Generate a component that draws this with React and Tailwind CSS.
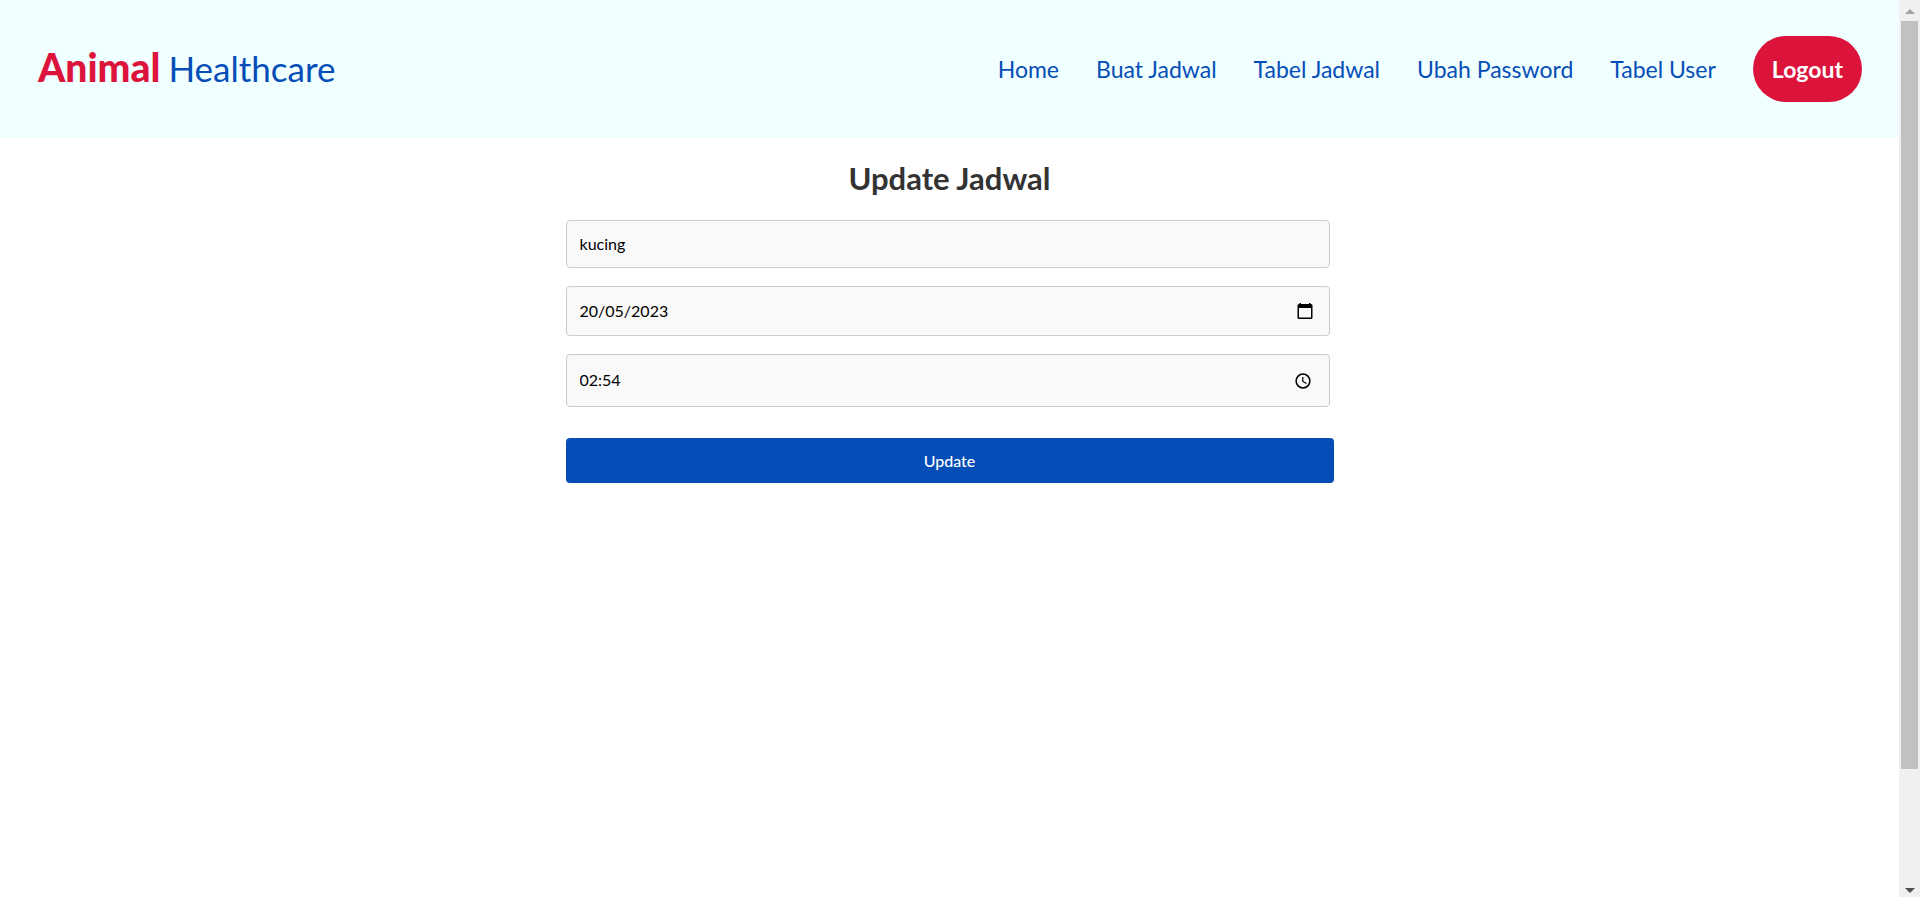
const links = ["Home", "Buat Jadwal", "Tabel Jadwal", "Ubah Password", "Tabel User"];

const fieldClass =
  "block w-full rounded border border-[#cccccc] bg-[#f9f9f9] px-[13px] pb-0.5 text-base text-black outline-none";

function CalendarIcon() {
  return (
    <svg viewBox="0 0 16 17" className="h-[17px] w-4" fill="currentColor" aria-hidden="true">
      <path
        fillRule="evenodd"
        d="M2.500 0h1.500v1h8V0h1.500v1h.500q1.500 0 1.500 1.500v12q0 1.500-1.500 1.500h-12Q.500 16 .500 14.500v-12Q.500 1 2 1h.500zM2 5v9.500h12V5z"
      />
    </svg>
  );
}

function ClockIcon() {
  return (
    <svg viewBox="0 0 16 16" className="size-4" fill="none" stroke="currentColor" aria-hidden="true">
      <circle cx="8" cy="8" r="6.900" strokeWidth="1.500" />
      <path d="M7.800 4v4.400l3.700 2.200" strokeWidth="1.200" />
    </svg>
  );
}

function Header() {
  return (
    <header className="flex items-center justify-between bg-[#f0ffff] pr-[37px] pl-[38px] py-9">
      <a href="#home" className="flex items-baseline gap-2 pb-[3px] leading-none text-[#054eb8]">
        <span className="text-[39px] leading-9 font-black text-[#dc143c]">Animal</span>
        <span className="text-[35px] leading-9">Healthcare</span>
      </a>
      <nav className="flex items-center gap-[37px] text-[23px] text-[#054eb8]">
        {links.map((label) => (
          <a key={label} href="#menu" className="whitespace-nowrap">
            {label}
          </a>
        ))}
        <button
          type="button"
          className="h-[66px] rounded-full bg-[#dc143c] px-[19px] font-bold text-white"
        >
          Logout
        </button>
      </nav>
    </header>
  );
}

function UpdateForm() {
  return (
    <main className="mx-auto w-full max-w-3xl pt-5">
      <h1 className="text-center text-[31px] leading-10 font-bold text-[#333333]">Update Jadwal</h1>
      <form className="mt-[22px]" onSubmit={(event) => event.preventDefault()}>
        <div className="flex flex-col gap-[18px] pr-1">
          <input
            type="text"
            aria-label="Hewan"
            defaultValue="kucing"
            className={`${fieldClass} h-12`}
          />
          <div className="relative">
            <input
              type="text"
              aria-label="Tanggal"
              defaultValue="20/05/2023"
              className={`${fieldClass} h-[50px]`}
            />
            <button
              type="button"
              aria-label="Pilih tanggal"
              className="absolute inset-y-0 right-[17px] flex items-center text-black"
            >
              <CalendarIcon />
            </button>
          </div>
          <div className="relative">
            <input
              type="text"
              aria-label="Waktu"
              defaultValue="02:54"
              className={`${fieldClass} h-[53px]`}
            />
            <button
              type="button"
              aria-label="Pilih waktu"
              className="absolute inset-y-0 right-[19px] flex items-center text-black"
            >
              <ClockIcon />
            </button>
          </div>
        </div>
        <button
          type="submit"
          className="mt-[31px] block h-[45px] w-full rounded bg-[#054eb8] text-base font-medium text-white"
        >
          Update
        </button>
      </form>
    </main>
  );
}

function ScrollRail() {
  return (
    <div aria-hidden="true" className="sticky top-0 flex h-screen w-[21px] shrink-0 flex-col bg-[#f0f0f0]">
      <div className="flex h-[21px] items-end justify-center pb-[7px]">
        <svg viewBox="0 0 10 5" className="h-[5px] w-2.5" fill="#a3a3a3">
          <path d="M5 0 10 5H0z" />
        </svg>
      </div>
      <div className="flex-1 px-0.5">
        <div className="h-7/8 bg-[#c1c1c1]" />
      </div>
      <div className="flex h-[21px] items-end justify-center pb-1">
        <svg viewBox="0 0 10 5" className="h-[5px] w-2.5" fill="#505050">
          <path d="M0 0h10L5 5z" />
        </svg>
      </div>
    </div>
  );
}

export default function App() {
  return (
    <div className="flex min-h-screen bg-white font-['Gill_Sans','Gill_Sans_MT',Lato,sans-serif]">
      <div className="min-w-0 flex-1">
        <Header />
        <UpdateForm />
      </div>
      <ScrollRail />
    </div>
  );
}
